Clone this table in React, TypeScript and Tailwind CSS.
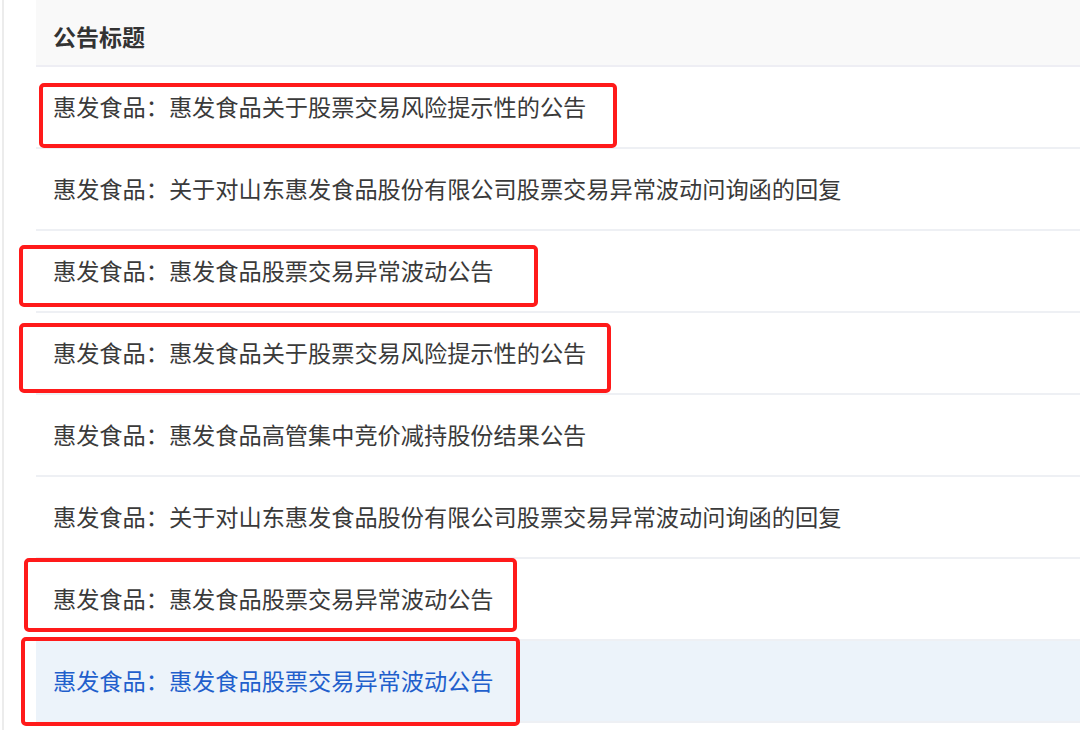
import React from 'react';

type Notice = {
  title: string;
  active?: boolean;
};

const NOTICES: Notice[] = [
  { title: '惠发食品：惠发食品关于股票交易风险提示性的公告' },
  { title: '惠发食品：关于对山东惠发食品股份有限公司股票交易异常波动问询函的回复' },
  { title: '惠发食品：惠发食品股票交易异常波动公告' },
  { title: '惠发食品：惠发食品关于股票交易风险提示性的公告' },
  { title: '惠发食品：惠发食品高管集中竞价减持股份结果公告' },
  { title: '惠发食品：关于对山东惠发食品股份有限公司股票交易异常波动问询函的回复' },
  { title: '惠发食品：惠发食品股票交易异常波动公告' },
  { title: '惠发食品：惠发食品股票交易异常波动公告', active: true },
];

// red annotation boxes drawn on top of the screenshot
const MARKS = [
  'left-[39px] top-[83px] w-[578px] h-[65px]',
  'left-[19px] top-[245px] w-[519px] h-[62px]',
  'left-[19px] top-[323px] w-[592px] h-[70px]',
  'left-[24px] top-[558px] w-[493px] h-[74px]',
  'left-[21px] top-[637px] w-[499px] h-[89px]',
];

const App: React.FC = () => {
  return (
    <div
      className="relative w-[1080px] h-[730px] overflow-hidden bg-white"
      style={{ fontFamily: '"Noto Sans CJK SC", "Noto Sans", sans-serif' }}
    >
      <div className="h-full pl-[2px]">
        <div className="h-full border-l-2 border-[#ececec] pl-[32px]">
          {/* header */}
          <div className="h-[67px] flex items-center pt-[7px] pl-[17px] bg-[#f9f9f9] border-b-2 border-[#eeeef4]">
            <span className="text-[23px] font-bold text-[#333]">公告标题</span>
          </div>

          {/* rows */}
          {NOTICES.map((n, i) => (
            <div
              key={i}
              className={
                n.active
                  ? 'h-[82px] flex items-center pl-[17px] bg-[#ecf3fa] border-b-2 border-[#eef0f4]'
                  : 'h-[82px] flex items-center pl-[17px] border-b-2 border-[#eef0f4]'
              }
            >
              <span
                className={
                  n.active
                    ? 'text-[23.2px] leading-none text-[#1f5fcc] whitespace-nowrap'
                    : 'text-[23.2px] leading-none text-[#3a3a3a] whitespace-nowrap'
                }
              >
                {n.title}
              </span>
            </div>
          ))}
        </div>
      </div>

      {MARKS.map((m, i) => (
        <div
          key={i}
          className={`absolute ${m} border-4 border-[#ff1a1a] rounded-[5px] pointer-events-none`}
        />
      ))}
    </div>
  );
};

export default App;
